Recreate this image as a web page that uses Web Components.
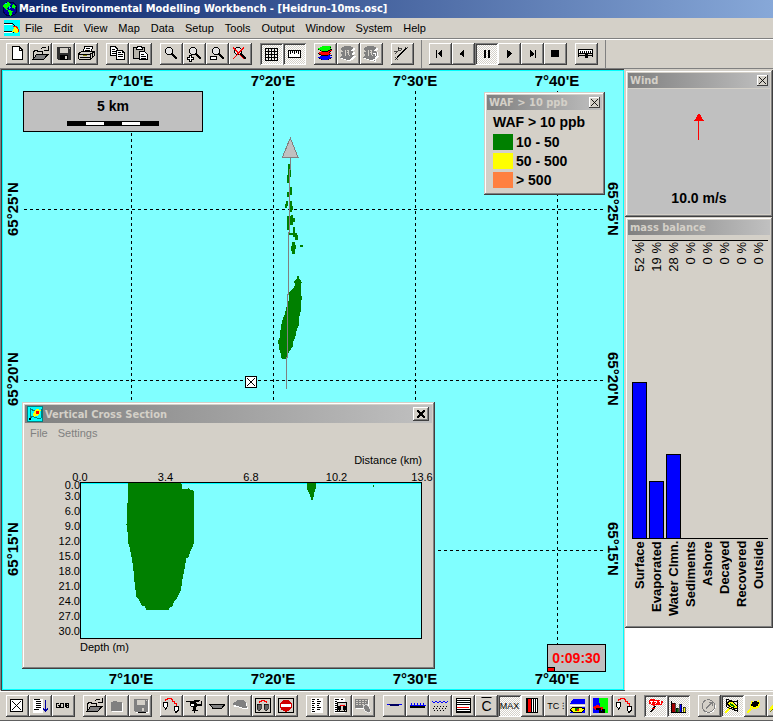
<!DOCTYPE html>
<html lang="en">
<head>
<meta charset="utf-8">
<title>Marine Environmental Modelling Workbench</title>
<style>
html, body { margin: 0; height: 100%; }
body { background: #fff; font: 11px/14px "Liberation Sans", Arial, sans-serif; color: #000; overflow: hidden; }
</style>
</head>
<body>
<workbench-app></workbench-app>

<script>
const FACE = '#d4d0c8';

/* Icons are drawn on a 66-unit square that covers the whole button face. */
const lens = '<circle cx="27" cy="24" r="11" fill="#e4e4e4" stroke="#000" stroke-width="3"/><path d="M35 32L50 47" stroke="#000" stroke-width="5"/>';
const folder = '<path d="M12 48V24h3v-3h9v3h15v9" fill="none" stroke="#000" stroke-width="3"/><path d="M13 48L24 33H58L45 48Z" fill="#808080" stroke="#000" stroke-width="3"/><path d="M37 16q8-7 15 0M57 10v11H46" fill="none" stroke="#000" stroke-width="3"/>';
const floppy = c => `<path d="M15 11H56V51H18L15 48Z" fill="${c}"/><path d="M24 14H48V30H24Z" fill="${FACE}"/><path d="M24 36H48V51H24Z" fill="${c === '#808080' ? '#808080' : '#000'}"/><path d="M39 40h6v9h-6zM51 14h3v3h-3z" fill="${FACE}"/>`;
const drops = '<path d="M11 21H23V34L17 42L11 34ZM42 33H55V45L48 52L42 45Z" fill="#fff" stroke="#000" stroke-width="3"/><path d="M17 19V12H23V9H33V12H38V18H44V24H48V33" fill="none" stroke="#f00" stroke-width="3"/>';
const layer = (y, c) => `<path d="M12 ${y + 8}L27 ${y}H54L45 ${y + 7}L54 ${y + 8}L40 ${y + 15}H24Z" fill="${c}"/>`;
const ghostLayers = '<g transform="translate(3 3)" fill="#fff"><path d="M9 18L24 9H42L54 15L45 22L54 27L45 33L54 38L40 50H27L9 43L18 36L9 30L18 25Z"/></g><path d="M9 18L24 9H39L51 15L42 22L51 27L42 33L51 38L38 50H27L9 43L18 36L9 30L18 25Z" fill="#808080"/><path d="M26 20V38M29 21h6v8h-6M32 29l6 9" stroke="#d4d0c8" stroke-width="3" fill="none"/>';
const ICONS = {
  blank: '<path d="M19 11H40L50 21V50H19Z" fill="#fff" stroke="#000" stroke-width="3"/><path d="M40 11V21H50" fill="none" stroke="#000" stroke-width="3"/>',
  open: folder,
  save: floppy('#303030'),
  saveOff: '<g transform="translate(3 3)">' + floppy('#fff') + '</g>' + floppy('#808080'),
  print: '<path d="M24 25L30 10H54L48 28" fill="#fff" stroke="#000" stroke-width="3"/><path d="M32 16H46M30 22H45" stroke="#000" stroke-width="3"/><path d="M11 32L21 25H57V39L46 50H14L11 46Z" fill="#d4d0c8" stroke="#000" stroke-width="3"/><path d="M11 33H46L57 27M46 33V50M14 43H45M51 30V43" fill="none" stroke="#000" stroke-width="3"/><path d="M24 38h12" stroke="#808000" stroke-width="3"/>',
  copy: '<path d="M14 10H27L34 17V37H14Z" fill="#fff" stroke="#000" stroke-width="3"/><path d="M18 18h9M18 24h12M18 30h12" stroke="#000" stroke-width="3"/><path d="M32 21H48L56 29V49H32Z" fill="#fff" stroke="#000" stroke-width="3"/><path d="M36 29h9M36 35h15M36 41h15M48 21v8h8" fill="none" stroke="#000" stroke-width="3"/>',
  paste: '<path d="M14 13H47V46H14Z" fill="#b8b4aa" stroke="#000" stroke-width="3"/><path d="M21 19V13H26V9H36V13H41V19Z" fill="#fff" stroke="#000" stroke-width="3"/><path d="M32 26H47L55 34V50H32Z" fill="#fff" stroke="#000" stroke-width="3"/><path d="M36 34h9M36 40h14M36 45h14" stroke="#000" stroke-width="3"/>',
  zoom: lens,
  zoomIn: '<g transform="translate(3 0)">' + lens + '</g><path d="M19 37h6v6h6v6h-6v6h-6v-6h-6v-6h6z" fill="#fff" stroke="#000" stroke-width="3"/>',
  zoomOut: '<g transform="translate(3 0)">' + lens + '</g><path d="M13 41H32V48H13Z" fill="#fff" stroke="#000" stroke-width="3"/>',
  zoomOff: lens + '<path d="M12 13L45 48M45 13L12 48" stroke="#f00" stroke-width="3"/>',
  grid: '<path d="M16 16H52V52H16ZM25 16V52M34 16V52M43 16V52M16 25H52M16 34H52M16 43H52" fill="none" stroke="#000" stroke-width="3"/>',
  ruler: '<path d="M16 23H53V43H16Z" fill="#fff" stroke="#000" stroke-width="3"/><path d="M22 24v8M28 24v6M34 24v8M40 24v6M46 24v8" stroke="#000" stroke-width="3"/>',
  layers: layer(37, '#000') + layer(35, '#00f') + layer(24, '#000') + layer(22, '#f00') + layer(11, '#000') + layer(9, '#0f0'),
  layersOff: ghostLayers,
  layersHelp: ghostLayers + '<path d="M39 34V29H51V37L45 42V47M45 51V56" fill="none" stroke="#fff" stroke-width="6"/><path d="M38 34V29H50V37L44 42V47M44 51V55" fill="none" stroke="#808080" stroke-width="3"/>',
  wand: '<path d="M18 43L46 15" stroke="#000" stroke-width="3"/><path d="M12 43l8 8M20 43l-8 8M43 12l7 7M50 12l-7 7M9 25h9M21 12v9h9V15H21M14 32l6-8" fill="none" stroke="#000" stroke-width="2"/>',
  first: '<path d="M21 20h4v24h-4zM40 20V44L26 32Z"/>',
  back: '<path d="M37 20V44L22 32Z"/>',
  pause: '<path d="M27 20h6v24h-6zM39 20h6v24h-6z"/>',
  play: '<path d="M28 20V44L43 32Z"/>',
  last: '<path d="M27 20V44L41 32ZM42 20h4v24h-4z"/>',
  halt: '<path d="M21 21H45V42H21Z"/>',
  slider: '<path d="M10 20H53V32H10Z" fill="#fff" stroke="#000" stroke-width="3"/><path d="M15 25v4M21 25v4M27 25v4M33 25v4M39 25v4M46 25v4" stroke="#000" stroke-width="3"/><path d="M10 32V41M53 32V41M10 38H53" stroke="#000" stroke-width="3"/><path d="M30 32h9v12h-9z"/>',
  crossBox: '<path d="M14 14H49V49H14Z" fill="#fff" stroke="#000" stroke-width="3"/><path d="M17 17L46 46M46 17L17 46" stroke="#000" stroke-width="3"/>',
  list: '<path d="M11 11H42V54H11Z" fill="#fff"/><path d="M15 14h18M21 20h15M21 26h15M21 32h15M21 38h15M15 44h15" stroke="#000" stroke-width="3"/><path d="M49 14V47M43 40L49 48L56 40" fill="none" stroke="#0000a0" stroke-width="4"/>',
  goll: '<path d="M22 25H13V37H22V31H18M26 25H33V37H26ZM39 25V37M43 25H49V37H43ZM43 31H49" fill="none" stroke="#000" stroke-width="3"/>',
  folderOff: '<path d="M18 24h9v-3h12v3h12v28H18z" fill="#fff"/><path d="M15 21h6v-3h12v3h15v27H15z" fill="#808080"/>',
  drops,
  copter: '<path d="M9 20H48M33 15h18" stroke="#000" stroke-width="3"/><path d="M21 22H39L42 27H54V18H57V33H45L39 38V45H30V38L21 33Z"/><path d="M24 27h9v6h-9z" fill="#fff"/><path d="M27 46h18M34 45v8" stroke="#000" stroke-width="3"/>',
  boat: '<path d="M10 27H57L48 39H20Z" fill="#808080" stroke="#000" stroke-width="3"/>',
  blob: '<path d="M15 30L30 18H45L54 27L57 42H42L27 36H15Z" fill="#fff"/><path d="M9 27L27 15H42L51 24L54 39H42L24 33Z" fill="#808080"/>',
  dropsBox: '<path d="M10 11H55V53H10Z" fill="none" stroke="#000" stroke-width="3"/><path d="M16 27H28V42L22 48L16 42ZM37 27H49V42L43 48L37 42Z" fill="#606060" stroke="#000" stroke-width="2"/><path d="M21 23V18H27V15H38V18H43V24" fill="none" stroke="#f00" stroke-width="3"/>',
  noEntry: '<path d="M11 11H56V53H11Z" fill="none" stroke="#000" stroke-width="3"/><circle cx="33" cy="32" r="18" fill="#d00000"/><path d="M18 27H48V36H18Z" fill="#fff"/>',
  report: '<path d="M15 9H51V54H15Z" fill="#fff"/><path d="M18 14h9M18 20h6M18 26h9M18 32h6M18 38h9M18 44h6M18 50h9M33 14h6M33 20h12M33 26h9M33 32h6M33 38h12M33 44h9" stroke="#000" stroke-width="3"/>',
  reportBox: '<path d="M15 9H48V54H15Z" fill="#fff"/><path d="M18 14h12M18 20h6M18 26h6M18 32h6M18 38h6M18 44h6M18 50h6M36 14h6" stroke="#000" stroke-width="3"/><path d="M24 22H53V50H24Z" fill="#d4d0c8" stroke="#000" stroke-width="3"/><path d="M27 34h10v9l-5 4-5-4zM41 34h10v9l-5 4-5-4z"/><path d="M33 30h15" stroke="#f00" stroke-width="3"/>',
  tableOff: '<path d="M12 14H51V42H12Z" fill="#fff"/><path d="M9 11H48V39H9Z" fill="#808080"/><path d="M12 17H45M12 23H42M12 29H36" stroke="#d4d0c8" stroke-width="3" stroke-dasharray="6 3"/><path d="M33 33L45 27L57 45L51 54L39 48Z" fill="#808080" stroke="#fff" stroke-width="2"/>',
  surface: '<path d="M12 29H56" stroke="#00f" stroke-width="3"/><path d="M18 27H50L45 34H24Z" fill="#000060"/>',
  bottom: '<path d="M13 32H59" stroke="#00f" stroke-width="3"/><path d="M17 24v6M26 24v6M35 24v6M44 24v6M53 24v6" stroke="#00f" stroke-width="3"/><path d="M13 33H57V39H13Z"/>',
  column: '<path d="M9 18L15 24L21 18L27 24L33 18L39 24L45 18L51 24L57 18" fill="none" stroke="#00f" stroke-width="3"/><path d="M15 35H54M12 41H54M15 47H45" stroke="#000" stroke-width="3" stroke-dasharray="3 6"/>',
  strata: '<path d="M12 11H54V53H12Z" fill="#fff" stroke="#000" stroke-width="3"/><path d="M12 17H54M12 23H54M12 29H54M12 44H54M12 50H54" stroke="#000" stroke-width="3"/><path d="M14 38H52" stroke="#f00" stroke-width="3"/>',
  bars: '<path d="M15 11H50V53H15Z" fill="#fff" stroke="#000" stroke-width="3"/><path d="M18 13h12v39h-12z" fill="#f00"/><path d="M20 12V54M32 12V54M38 12V54M44 12V54" stroke="#000" stroke-width="3"/>',
  eye: '<path d="M9 27L18 12H54V27Z" fill="#00f"/><path d="M9 54L24 36H54V54Z" fill="#00f"/><path d="M9 45L18 36H36L54 42L45 51H18Z" fill="#ff0" stroke="#000" stroke-width="3"/><path d="M9 32H54" stroke="#fff" stroke-width="3"/><path d="M24 39h12v9h-12z" fill="#008000"/><path d="M30 42h6v5h-6z" fill="#f00"/>',
  coast: '<path d="M9 9H54V54H9Z" fill="#00f"/><path d="M27 9H54V54H39V36H30Z" fill="#0f0"/><path d="M9 37L24 28L30 36H39V45H27L18 45Z" fill="#f00"/><path d="M18 42H30V51H42V45H36" stroke="#000" stroke-width="5" fill="none"/>',
  flag: '<path d="M14 15L25 12L57 18L54 30L27 32L14 24Z" fill="#f00"/><path d="M19 18l7 0-4 8M31 18l8 1-4 8M45 20l6 1-3 6" stroke="#fff" stroke-width="3" fill="none"/><path d="M33 33L21 51" stroke="#000" stroke-width="5"/><path d="M23 39h10" stroke="#f00" stroke-width="3"/>',
  chart: '<path d="M13 18V53H57" fill="none" stroke="#000" stroke-width="3"/><path d="M16 24h9v28h-9z" fill="#a00000"/><path d="M28 39h6v13h-6z" fill="#008000"/><path d="M38 27h6v25h-6z" fill="#00f"/><path d="M48 36h6v16h-6z" fill="#ff0"/><path d="M16 24h9v28M28 52V39h6v13M38 52V27h6v25M48 52V36h6v16" fill="none" stroke="#000" stroke-width="2"/>',
  dial: '<circle cx="33" cy="35" r="19" fill="none" stroke="#fff" stroke-width="3"/><circle cx="31" cy="33" r="19" fill="#d4d0c8" stroke="#808080" stroke-width="3"/><path d="M24 40L41 23M33 23h9v9" fill="none" stroke="#808080" stroke-width="3"/>',
  plume: '<path d="M12 54L27 39" stroke="#ff0" stroke-width="7"/><path d="M17 11V36L48 48V18L39 21L17 12Z" fill="none" stroke="#000" stroke-width="3"/><path d="M18 27L24 18L36 21L51 36L45 42L30 36Z" fill="#ff0" stroke="#000" stroke-width="3"/><path d="M27 24l12 6 3 6-12-3z" fill="#008000"/>',
  spot: '<path d="M9 54L21 42" stroke="#ff0" stroke-width="7"/><path d="M21 18L30 21L45 16L48 27L45 39L30 42L18 39Z" fill="#ff0"/><path d="M24 21h6v-3h9v3h6v6h-3v6h-6v3h-9v-3h-6v-6h3z"/>',
  edge: '<path d="M9 45L21 30" stroke="#ff0" stroke-width="7"/><path d="M9 51L18 42" stroke="#808000" stroke-width="3"/>'
};

function define(name, html, setup) {
  const tpl = document.createElement('template');
  tpl.innerHTML = html;
  customElements.define(name, class extends HTMLElement {
    constructor() {
      super();
      this.attachShadow({ mode: 'open' });
    }
    connectedCallback() {
      if (this.shadowRoot.firstChild) return;
      this.shadowRoot.append(tpl.content.cloneNode(true));
      if (setup) setup(this, this.shadowRoot);
    }
  });
}

define('tool-button', `
<style>
:host { display: block; flex: none; }
button { display: grid; place-items: center; box-sizing: border-box; width: 23px; height: 22px; margin: 0; padding: 0; border: 0;
  background: ${FACE}; font: 9px/10px "Liberation Sans", Arial, sans-serif; color: #000;
  box-shadow: inset -1px -1px #404040, inset 1px 1px #fff, inset -2px -2px #808080; }
:host([pressed]) button { background: repeating-conic-gradient(#fff 0 25%, ${FACE} 0 50%) 0 0 / 2px 2px;
  box-shadow: inset 1px 1px #808080, inset -1px -1px #fff, inset 2px 2px #404040; }
svg { display: block; width: 22px; height: 22px; justify-self: start; }
:host([big]) button { font-size: 14px; text-decoration: overline; }
</style>
<button type="button"></button>`, (el, root) => {
  const b = root.querySelector('button');
  const text = el.getAttribute('text');
  b.setAttribute('aria-label', text || el.getAttribute('icon'));
  if (el.hasAttribute('pressed')) b.setAttribute('aria-pressed', 'true');
  if (text) b.textContent = text;
  else b.innerHTML = `<svg viewBox="0 0 66 66" shape-rendering="crispEdges" aria-hidden="true">${ICONS[el.getAttribute('icon')]}</svg>`;
});

/* A strip holds groups of buttons; "!" marks a pressed one, "=" a text face. */
define('tool-strip', `
<style>
:host { display: flex; flex: none; gap: 8px; padding: 3px 7px; }
div { display: flex; }
</style>`, (el, root) => {
  for (const group of el.getAttribute('groups').split('|')) {
    const div = document.createElement('div');
    for (const item of group.trim().split(/\s+/)) {
      const b = document.createElement('tool-button');
      let id = item;
      if (id.startsWith('!')) { b.setAttribute('pressed', ''); id = id.slice(1); }
      if (id.startsWith('=')) { b.setAttribute('text', id.slice(1).replace('_', ' ')); if (id === '=C') b.setAttribute('big', ''); }
      else b.setAttribute('icon', id);
      div.append(b);
    }
    root.append(div);
  }
});

define('title-bar', `
<style>
:host { display: flex; flex: none; align-items: center; gap: 1px; height: 18px; padding-left: 2px; overflow: hidden;
  background: linear-gradient(to right, #0a246a, #87a8d8); color: #fff; }
h1 { margin: 0; font: bold 11px/18px "DejaVu Sans Condensed", sans-serif; white-space: nowrap; }
svg { flex: none; }
</style>
<svg width="16" height="16" viewBox="0 0 16 16" shape-rendering="crispEdges" aria-hidden="true"><circle cx="8" cy="8" r="7" fill="#0000a0" stroke="#000040"/><path d="M2 3L6 1L9 3L7 6L5 7L6 9L4 9L1 6ZM11 3L14 5L13 8L10 7L10 4ZM6 9L11 10L10 13L8 15L7 12Z" fill="#0f0"/><path d="M7 5l2 1-2 2zM3 2h2v1H3z" fill="#00c0ff"/></svg>
<h1><slot></slot></h1>`);

define('menu-bar', `
<style>
:host { display: flex; flex: none; align-items: center; box-sizing: border-box; height: 21px; padding: 0 4px; background: ${FACE}; border-bottom: 1px solid #808080; }
button { margin: 0; border: 0; padding: 0 6px 0 5px; background: none; color: #000; font: 11px/18px "Liberation Sans", Arial, sans-serif; white-space: nowrap; }
svg { flex: none; }
</style>
<svg width="16" height="16" viewBox="0 0 16 16" shape-rendering="crispEdges" aria-hidden="true"><path d="M0 0h16v16H0z" fill="#00ffff"/><path d="M0 4h8M0 12h8" stroke="#fff"/><path d="M0 3.500h8l3 2M0 11.500h8l2 1" fill="none" stroke="#000"/><path d="M11 6l3 2 1 3-2 2-5-1z" fill="#ff0"/><path d="M9 6h3l2 3v3" fill="none" stroke="#f00"/></svg>`, (el, root) => {
  for (const name of el.getAttribute('items').split(' ')) {
    const b = document.createElement('button');
    b.type = 'button';
    b.textContent = name;
    root.append(b);
  }
});

define('float-window', `
<style>
:host { display: flex; flex-direction: column; box-sizing: border-box; padding: 3px; background: ${FACE};
  box-shadow: inset -1px -1px #404040, inset 1px 1px ${FACE}, inset -2px -2px #808080, inset 2px 2px #fff; }
header { display: flex; flex: none; align-items: center; height: 15px; padding: 0 2px; background: linear-gradient(to right, #808080, #c0c0c0); color: ${FACE}; }
h2 { flex: 1; margin: 0; font: bold 11px/15px "DejaVu Sans Condensed", sans-serif; white-space: nowrap; }
button { display: grid; place-items: center; width: 11px; height: 11px; margin: 0; padding: 0; border: 0; background: ${FACE};
  box-shadow: inset -1px -1px #404040, inset 1px 1px #fff; }
button svg { width: 7px; height: 7px; }
:host([large]) header { height: 18px; }
:host([large]) ::slotted(svg) { margin-right: 2px; }
:host([large]) button { width: 16px; height: 14px; margin-right: 1px; box-shadow: inset -1px -1px #404040, inset 1px 1px #fff, inset -2px -2px #808080; }
:host([large]) button svg { width: 8px; height: 8px; stroke-width: 2; }
:host([fixed]) button { display: none; }
</style>
<header><slot name="icon"></slot><h2></h2><button type="button" aria-label="Close"><svg viewBox="0 0 8 8" stroke="#000" stroke-width="1" shape-rendering="crispEdges"><path d="M0 0L8 8M8 0L0 8"/></svg></button></header>
<slot></slot>`, (el, root) => { root.querySelector('h2').textContent = el.getAttribute('caption'); });

define('scale-bar', `
<style>
:host { display: block; box-sizing: border-box; border: 1px solid #000; background: #c0c0c0; padding: 5px 0; text-align: center; font: bold 14px/18px "Liberation Sans", Arial, sans-serif; }
div { display: flex; box-sizing: border-box; width: 92px; height: 5px; margin: 6px auto 1px; border: 1px solid #000; }
i { flex: 1; background: #000; } i:nth-child(even) { background: #fff; }
</style>
<slot></slot><div><i></i><i></i><i></i><i></i><i></i></div>`);

define('legend-list', `
<style>
:host { display: grid; gap: 3px; padding: 3px 6px; font: bold 14px/16px "Liberation Sans", Arial, sans-serif; white-space: nowrap; }
p { display: flex; gap: 3px; margin: 0; } i { width: 20px; height: 16px; }
p:first-of-type { line-height: 18px; }
</style>
<p>WAF &gt; 10 ppb</p>
<p><i style="background:#008000"></i>10 - 50</p>
<p><i style="background:#ffff00"></i>50 - 500</p>
<p><i style="background:#ff8040"></i>&gt; 500</p>`);

define('sim-clock', `
<style>
:host { display: block; box-sizing: border-box; border: 1px solid #000; background: #c0c0c0; color: #f00; text-align: center; font: bold 14px/22px "Liberation Sans", Arial, sans-serif; padding: 2px 0 0; }
i { display: block; width: 6px; height: 3px; border: solid #000; border-width: 1px 1px 0 0; background: #f00; margin-top: -2px; }
</style>
<slot></slot><i></i>`);

define('cross-section', `
<style>
:host { display: block; font: 11px/14px "Liberation Sans", Arial, sans-serif; }
nav { display: flex; padding: 0 0 0 1px; }
nav button { margin: 0; padding: 3px 6px 3px 4px; border: 0; background: none; color: #808080; font: 11px/14px "Liberation Sans", Arial, sans-serif; }
.plot { display: grid; grid-template: 16px 13px auto 18px / 55px 1fr; padding: 10px 10px 22px 0; }
.dist { grid-area: 1 / 2; text-align: right; }
.x { grid-area: 2 / 2; display: flex; justify-content: space-between; margin: 2px -12px 0; line-height: 13px; }
.x span { width: 24px; text-align: center; }
.y { grid-area: 3 / 1; display: flex; flex-direction: column; text-align: right; height: 157px; }
.y span { height: 15px; line-height: 15px; }
.y span:first-child { height: 7px; line-height: 7px; }
.sea { grid-area: 3 / 2; box-sizing: border-box; border: 1px solid #000; background: #80ffff; }
.sea svg { display: block; width: 100%; height: 100%; }
.depth { grid-area: 4 / 2; padding-top: 1px; }
</style>
<nav><button type="button">File</button><button type="button">Settings</button></nav>
<div class="plot">
<div class="dist">Distance (km)</div>
<div class="x"><span>0.0</span><span>3.4</span><span>6.8</span><span>10.2</span><span>13.6</span></div>
<div class="y"><span>0.0</span><span>3.0</span><span>6.0</span><span>9.0</span><span>12.0</span><span>15.0</span><span>18.0</span><span>21.0</span><span>24.0</span><span>27.0</span><span>30.0</span></div>
<div class="sea"><svg viewBox="243 339 1017 465" preserveAspectRatio="none" shape-rendering="crispEdges" role="img" aria-label="Concentration profile"><path d="M243 339h1017v3H243z" fill="#0ff"/><path fill="#008000" d="M384 339H543L546 357L560 358L566 354L568 358L579 361L582 380V495L579 527L570 545L565 560L558 565L552 600L546 630L542 660L530 685L520 695L518 707L508 711L505 719H438L435 708L425 705L414 685L408 680L405 650L402 625L399 590L394 560L388 530L384 520L383 490L379 465L382 430V400L384 380ZM918 339H945V354L941 369L936 390H933L924 366L918 357ZM1116 345h3v6h-3z"/></svg></div>
<div class="depth">Depth (m)</div>
</div>`);

define('wind-gauge', `
<style>
:host { display: flex; flex-direction: column; align-items: center; box-sizing: border-box; height: 126px; margin-top: 1px; padding: 24px 0 6px; background: #c0c0c0; font: bold 14px/20px "Liberation Sans", Arial, sans-serif; }
svg { display: block; }
span { margin-top: auto; }
</style>
<svg width="10" height="28" viewBox="0 0 10 28" shape-rendering="crispEdges" aria-hidden="true"><path d="M5 0L10 8H0Z" fill="#f00"/><path d="M4 8h1v19H4z" fill="#f00"/></svg>
<span><slot></slot></span>`);

define('mass-chart', `
<style>
:host { display: grid; grid-template-columns: repeat(8, 17px); grid-template-rows: 298px 85px; margin: 5px 0 0 4px; border-top: 1px solid #000; width: 136px; }
.col { display: flex; flex-direction: column; justify-content: space-between; border-bottom: 1px solid #000; }
.v, .n { writing-mode: vertical-rl; transform: rotate(180deg); white-space: nowrap; line-height: 15px; width: 15px; }
.v { font-size: 13px; text-align: right; padding-bottom: 1px; }
.n { font-size: 13px; font-weight: bold; text-align: right; padding-bottom: 2px; }
.bar { box-sizing: border-box; width: 15px; border: 1px solid #000; border-bottom: 0; background: #00f; }
</style>`, (el, root) => {
  const rows = [['Surface', 52], ['Evaporated', 19], ['Water Clmn.', 28], ['Sediments', 0], ['Ashore', 0], ['Decayed', 0], ['Recovered', 0], ['Outside', 0]];
  root.innerHTML += rows.map(([, v]) => `<div class="col"><span class="v">${v} %</span>${v ? `<div class="bar" style="height:${v * 3}px"></div>` : ''}</div>`).join('')
    + rows.map(([n]) => `<span class="n">${n}</span>`).join('');
});

define('map-view', `
<style>
:host { display: grid; grid-template: 21px 1fr 20px / 20px 1fr 19px; position: relative; min-width: 0; overflow: hidden; box-sizing: border-box;
  border: 1px solid #00ffff; background: #80ffff; outline: 1px solid #404040; outline-offset: 0; margin: 1px 0 0 2px;
  font: bold 15px/20px "Liberation Sans", Arial, sans-serif; }
.lon { display: flex; grid-column: 1 / -1; padding-left: 57px; overflow: hidden; }
.lon span { flex: none; width: 142px; text-align: center; }
.lat { display: flex; flex-direction: row; writing-mode: vertical-rl; grid-row: 2; overflow: hidden; padding-top: 32px; }
.lat span { flex: none; height: 170px; text-align: center; line-height: 19px; }
.west { grid-column: 1; }
.west span { transform: rotate(180deg); }
.east { grid-column: 3; }
.south { grid-row: 3; }
.chart { position: absolute; left: 0; top: 0; width: 100%; height: 100%; }
scale-bar { position: absolute; left: 20px; top: 20px; width: 180px; height: 41px; }
.waf { position: absolute; left: 481px; top: 21px; width: 121px; height: 103px; }
.section { position: absolute; left: 19px; top: 331px; width: 413px; height: 267px; }
sim-clock { position: absolute; right: 17px; bottom: 17px; width: 59px; height: 28px; }
</style>
<svg class="chart" aria-hidden="true" shape-rendering="crispEdges">
<g stroke="#000" stroke-dasharray="3 3"><path d="M128.500 20V597M270.500 20V597M412.500 20V597M554.500 20V597M21 138.500H602M21 309.500H602M21 479.500H602"/></g>
<svg x="227" y="49" width="120" height="270" viewBox="0 0 360 810">
<path fill="#008000" d="M200 469H208V477L212 480L215 487L212 500V515L216 535L212 550V575L208 590L207 615L200 630L196 650L190 665L188 680L175 700L168 718H155L152 700L146 685L145 660L150 650L152 625L157 600L165 580L170 560L176 540L178 515L190 505L195 495L193 485L200 475Z"/>
<path fill="#008000" d="M174 132h6v12h3v27h-6v17h-6v-23h3zM180 201h6v24h-6v6h-9v-15h9zM168 243h6v15h-3v6h-6v-12h3zM177 243h9v15h3v12h-3v6h-9zM171 288h12v-3h6v9h6v12h-6v9h-12v15h-6zM189 321h6v18h6v6h3v15h-9v-9h-6v-6h-12v-6h12zM187 366h9v9h3v12h-3v15h-9v-9h-3v-15h3zM210 375h9v6h-9z"/>
<path d="M181 113V147H178V336H175V522H172V711H169V807" fill="none" stroke="#808080" stroke-width="3"/>
<path d="M181 54L204 112H157Z" fill="#c0c0c0" stroke="#808080" stroke-width="3"/>
<path d="M46 769H80V802H46Z" fill="#fff" stroke="#000" stroke-width="3"/><path d="M50 773L76 799M76 773L50 799" stroke="#000" stroke-width="3"/>
</svg>
</svg>
<div class="lon"><span>7°10'E</span><span>7°20'E</span><span>7°30'E</span><span>7°40'E</span></div>
<div class="lat west"><span>65°25'N</span><span>65°20'N</span><span>65°15'N</span></div>
<div class="lat east"><span>65°25'N</span><span>65°20'N</span><span>65°15'N</span></div>
<div class="lon south"><span>7°10'E</span><span>7°20'E</span><span>7°30'E</span><span>7°40'E</span></div>
<scale-bar>5 km</scale-bar>
<float-window class="waf" caption="WAF &gt; 10 ppb"><legend-list></legend-list></float-window>
<sim-clock>0:09:30</sim-clock>
<float-window class="section" large caption="Vertical Cross Section">
<svg slot="icon" width="16" height="16" viewBox="0 0 16 16" shape-rendering="crispEdges" aria-hidden="true"><path d="M0 0h16v16H0z" fill="#008080"/><path d="M1 1h14v14H1z" fill="#00ffff"/><path d="M3 2V10L14 13M3 3L8 5M14 3V12M2 13L12 6" fill="none" stroke="#008080"/><path d="M6 8L9 3L14 4L12 9L7 11Z" fill="#ff0"/><path d="M9 5h3v3H9z" fill="#f00"/><path d="M2 12h2v2H2z" fill="#000"/></svg>
<cross-section></cross-section></float-window>`);

define('workbench-app', `
<style>
:host { display: flex; flex-direction: column; min-height: 100vh; }
.tools { display: flex; flex: none; background: ${FACE}; border-top: 1px solid #fff; overflow: hidden; }
.tools tool-strip + tool-strip { border-left: 1px solid #808080; }
.tools tool-strip:first-child { padding-left: 6px; }
.end { border-left: 1px solid #808080; }
main { display: grid; grid-template-columns: minmax(0, 1fr) 149px; flex: 1; border-top: 1px solid #808080; background: #808080; }
aside { display: flex; flex-direction: column; background: #fff; border-left: 1px solid ${FACE}; position: relative; }
.wind { height: 148px; border-top: 1px solid ${FACE}; }
.mass { height: 411px; }
.bottom { border-bottom: 1px solid #606060; margin-top: 1px; }
.bottomwrap { flex: none; background: ${FACE}; overflow: hidden; }
</style>
<title-bar>Marine Environmental Modelling Workbench - [Heidrun-10ms.osc]</title-bar>
<menu-bar items="File Edit View Map Data Setup Tools Output Window System Help"></menu-bar>
<div class="tools">
<tool-strip groups="blank open save print|copy paste|zoom zoomIn zoomOut zoomOff|!grid !ruler|layers layersOff layersHelp|wand"></tool-strip>
<tool-strip groups="first back !pause play last halt|slider"></tool-strip>
<span class="end"></span>
</div>
<main>
<map-view></map-view>
<aside>
<float-window class="wind" caption="Wind"><wind-gauge>10.0 m/s</wind-gauge></float-window>
<float-window class="mass" fixed caption="mass balance"><mass-chart></mass-chart></float-window>
</aside>
</main>
<div class="bottomwrap"><div class="tools bottom">
<tool-strip groups="crossBox list goll|open folderOff saveOff|drops copter boat blob dropsBox noEntry|report reportBox tableOff|surface bottom column strata =C !=MAX bars =TC_⁝ eye coast drops|!flag !chart|dial !plume spot edge"></tool-strip>
</div></div>`);
</script>
</body>
</html>
